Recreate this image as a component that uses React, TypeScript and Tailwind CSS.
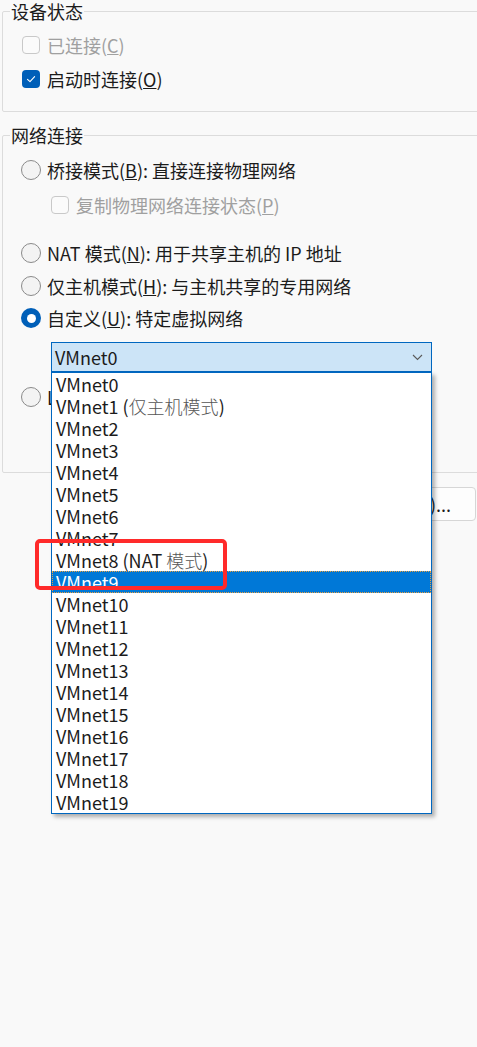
import React from "react";

const FONT = { fontFamily: '"Noto Sans CJK SC", "Noto Sans", sans-serif' };

function Checkbox({ checked, disabled }: { checked?: boolean; disabled?: boolean }) {
  if (checked) {
    return (
      <span className="w-[18px] h-[18px] rounded-[4px] bg-[#005fb8] flex items-center justify-center shrink-0">
        <svg width="12" height="12" viewBox="0 0 12 12" fill="none">
          <path d="M2.5 6.3 L5 8.6 L9.6 3.6" stroke="white" strokeWidth="1.1" strokeLinecap="round" strokeLinejoin="round" />
        </svg>
      </span>
    );
  }
  return (
    <span
      className={
        disabled
          ? "w-[18px] h-[18px] rounded-[4px] border border-[#c9c9c9] bg-[#fbfbfb] shrink-0"
          : "w-[18px] h-[18px] rounded-[4px] border border-[#8a8a8a] bg-[#f3f3f3] shrink-0"
      }
    />
  );
}

function Radio({ checked }: { checked?: boolean }) {
  if (checked) {
    return (
      <span className="w-[20px] h-[20px] rounded-full bg-[#005fb8] flex items-center justify-center shrink-0">
        <span className="w-[9px] h-[9px] rounded-full bg-white" />
      </span>
    );
  }
  return <span className="w-[20px] h-[20px] rounded-full border border-[#8a8a8a] bg-[#f3f3f3] shrink-0" />;
}

const items = Array.from({ length: 20 }, (_, i) => i);

export default function App() {
  return (
    <div style={FONT} className="relative w-[477px] h-[1047px] bg-[#f9f9f9] overflow-hidden text-[18px] leading-[22px] text-[#1b1b1b]">
      {/* 设备状态 */}
      <fieldset className="ml-[2px] w-[520px] h-[112px] border border-[#dcdcdc] rounded-[2px]">
        <legend className="ml-[7px] px-[1px] leading-[22px]">设备状态</legend>
        <div className="flex flex-col pl-[19px]">
          <div className="mt-[7px] h-[32px] flex items-center gap-[7px] text-[#a0a0a0]">
            <Checkbox disabled />
            <span>
              已连接(<u>C</u>)
            </span>
          </div>
          <div className="mt-[1px] h-[33px] flex items-center gap-[7px]">
            <Checkbox checked />
            <span>
              启动时连接(<u>O</u>)
            </span>
          </div>
        </div>
      </fieldset>

      {/* 网络连接 */}
      <fieldset className="mt-[12px] ml-[2px] w-[520px] h-[349px] border border-[#dcdcdc] rounded-[2px]">
        <legend className="ml-[7px] px-[1px] leading-[22px]">网络连接</legend>
        <div className="flex flex-col pl-[18px]">
          <div className="mt-[8px] h-[32px] flex items-center gap-[6px]">
            <Radio />
            <span>
              桥接模式(<u>B</u>): 直接连接物理网络
            </span>
          </div>
          <div className="mt-[3px] h-[32px] flex items-center gap-[7px] pl-[30px] text-[#a0a0a0]">
            <Checkbox disabled />
            <span>
              复制物理网络连接状态(<u>P</u>)
            </span>
          </div>
          <div className="mt-[16px] h-[32px] flex items-center gap-[6px]">
            <Radio />
            <span>
              NAT 模式(<u>N</u>): 用于共享主机的 IP 地址
            </span>
          </div>
          <div className="mt-[1px] h-[32px] flex items-center gap-[6px]">
            <Radio />
            <span>
              仅主机模式(<u>H</u>): 与主机共享的专用网络
            </span>
          </div>
          <div className="h-[32px] flex items-center gap-[6px]">
            <Radio checked />
            <span>
              自定义(<u>U</u>): 特定虚拟网络
            </span>
          </div>

          {/* select */}
          <div className="relative mt-[8px] ml-[30px] w-[381px]">
            <div className="h-[30px] border border-[#0067c0] bg-[#cce4f7] flex items-center justify-between pl-[3px] pr-[8px]">
              <span>VMnet0</span>
              <svg width="11" height="7" viewBox="0 0 11 7" fill="none">
                <path d="M1 1 L5.5 5.5 L10 1" stroke="#5a5a5a" strokeWidth="1.1" />
              </svg>
            </div>
          </div>

          <div className="mt-[9px] h-[32px] flex items-center gap-[6px]">
            <Radio />
            <span>LAN 区段(<u>L</u>):</span>
          </div>
        </div>
      </fieldset>

      <div className="flex justify-end mt-[14px] pr-[1px]">
        <button className="w-[120px] h-[34px] rounded-[4px] border border-[#d6d6d6] bg-[#fdfdfd] flex items-center justify-end pr-[24px]">
          高级(<u>V</u>)...
        </button>
      </div>

      {/* dropdown list overlay */}
      <div className="absolute left-[51px] top-[372px] w-[381px] border border-[#0067c0] bg-white shadow-[3px_3px_4px_rgba(0,0,0,0.3)]">
        {items.map((i) =>
          i === 9 ? (
            <div key={i} className="h-[22px] flex items-center pl-[3px] bg-[#0078d7] text-white border border-dotted border-[#e8a040]">
              VMnet{i}
            </div>
          ) : (
            <div key={i} className="h-[22px] flex items-center pl-[3px] border border-transparent">
              {i === 1 ? (
                <span>
                  VMnet1 (<span className="text-[#555] font-light">仅主机模式</span>)
                </span>
              ) : i === 8 ? (
                <span>
                  VMnet8 (NAT <span className="text-[#555] font-light">模式</span>)
                </span>
              ) : (
                <span>VMnet{i}</span>
              )}
            </div>
          )
        )}
      </div>

      {/* red annotation */}
      <div className="absolute left-[35px] top-[539px] w-[192px] h-[51px] border-[4px] border-[#ff2a2a] rounded-[5px]" />
    </div>
  );
}
